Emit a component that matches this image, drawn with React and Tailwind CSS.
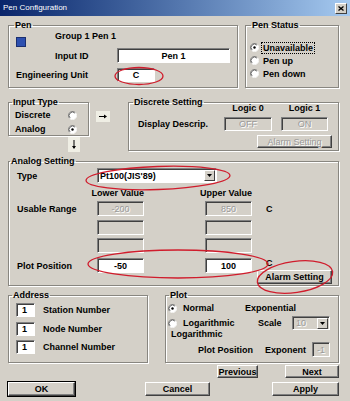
const Radio = ({ on }) => (
  <svg width="9" height="9" viewBox="0 0 12 12" className="shrink-0">
    <circle cx="6" cy="6" r="5" fill="#fff" />
    <path d="M2.1 9.9A5.5 5.5 0 0 1 9.9 2.1" fill="none" stroke="#808080" strokeWidth="1" />
    <path d="M2.8 9.2A4.5 4.5 0 0 1 9.2 2.8" fill="none" stroke="#404040" strokeWidth="1" />
    <path d="M9.9 2.1A5.5 5.5 0 0 1 2.1 9.9" fill="none" stroke="#fff" strokeWidth="1" />
    {on && <circle cx="6" cy="6" r="1.6" fill="#000" />}
  </svg>
);

const Group = ({ title, className = "", legend = "ml-[5px]", children }) => (
  <fieldset className={`border border-[#888680] shadow-[inset_1px_1px_0_#fff,1px_1px_0_#fff] ${className}`}>
    <legend className={`px-[1px] leading-[10px] ${legend}`}>{title}</legend>
    {children}
  </fieldset>
);

const Field = ({ className = "", disabled, children }) => (
  <div
    className={`flex items-center shrink-0 border border-t-[#808080] border-l-[#808080] border-b-white border-r-white shadow-[inset_1px_1px_0_#404040] ${
      disabled ? "bg-[#d4d0c8] text-[#9a9a9a] font-normal [text-shadow:1px_1px_0_#fff]" : "bg-white text-black"
    } ${className}`}
  >
    {children}
  </div>
);

const Btn = ({ className = "", disabled, children }) => (
  <button
    className={`flex items-center justify-center shrink-0 border border-t-white border-l-white border-b-[#404040] border-r-[#404040] shadow-[inset_-1px_-1px_0_#808080] ${
      disabled ? "text-[#9a9a9a] font-normal [text-shadow:1px_1px_0_#fff]" : "font-bold"
    } ${className}`}
  >
    {children}
  </button>
);

const DropBtn = () => (
  <div className="ml-auto mr-[1px] w-[11px] h-[11px] flex items-center justify-center bg-[#d4d0c8] border border-t-white border-l-white border-b-[#404040] border-r-[#404040]">
    <svg width="5" height="3" viewBox="0 0 5 3">
      <path d="M0 0h5L2.5 3z" fill="#000" />
    </svg>
  </div>
);

const ArrowBox = ({ down, className = "" }) => (
  <div className={`flex items-center justify-center bg-[#efeee4] ${down ? "w-[12px] h-[15px]" : "w-[14px] h-[11px]"} ${className}`}>
    {down ? (
      <svg width="12" height="15" viewBox="0 0 12 15">
        <path d="M6 3v8" stroke="#000" strokeWidth="1" />
        <path d="M4 9l2 3 2-3z" fill="#000" />
      </svg>
    ) : (
      <svg width="14" height="11" viewBox="0 0 14 11">
        <path d="M3 5.5h7" stroke="#000" strokeWidth="1" />
        <path d="M8 3.5l3 2-3 2z" fill="#000" />
      </svg>
    )}
  </div>
);

export default function App() {
  return (
    <div className="relative w-[350px] h-[401px] overflow-hidden bg-[#d4d0c8] [font-family:'Liberation_Sans',Arial,sans-serif] text-[9px] leading-[10px] font-bold text-black">
      <div className="h-[16px] flex items-center justify-between pl-[3px] pr-[3px] bg-linear-to-r from-[#0a246a] to-[#a6caf0]">
        <span className="text-white font-normal text-[8px]">Pen Configuration</span>
        <div className="w-[12px] h-[11px] flex items-center justify-center bg-[#d4d0c8] border border-t-white border-l-white border-b-[#404040] border-r-[#404040]">
          <svg width="6" height="5" viewBox="0 0 6 5">
            <path d="M0.5 0.5l5 4M5.5 0.5l-5 4" stroke="#000" strokeWidth="1.3" />
          </svg>
        </div>
      </div>

      <div className="flex flex-col pl-[8px] pr-[11px] pt-[4px]">
        {/* pen + status */}
        <div className="flex justify-between">
          <Group title="Pen" legend="ml-[5px]" className="w-[230px] h-[68px]">
            <div className="flex pl-[7px]">
              <div className="w-[39px] pt-[7px]">
                <div className="w-[10px] h-[10px] bg-[#2d50b0] border border-[#1b2f70]" />
              </div>
              <div className="flex flex-col">
                <div className="h-[12px] flex items-center">Group 1 Pen 1</div>
                <div className="flex items-center mt-[6px]">
                  <span className="w-[62px]">Input ID</span>
                  <Field className="w-[113px] h-[15px] justify-center">Pen 1</Field>
                </div>
              </div>
            </div>
            <div className="flex items-center pl-[7px] mt-[5px]">
              <span className="w-[101px]">Engineering Unit</span>
              <Field className="w-[38px] h-[14px] justify-center">C</Field>
            </div>
          </Group>

          <Group title="Pen Status" legend="ml-[5px]" className="w-[94px] h-[68px]">
            <div className="flex flex-col pl-[4px] pt-[11px]">
              {[
                ["Unavailable", true],
                ["Pen up", false],
                ["Pen down", false],
              ].map(([label, on]) => (
                <div key={label} className="h-[13px] flex items-center">
                  <Radio on={on} />
                  <span className={`ml-[3px] px-[1px] leading-[10px] ${on ? "outline-1 outline-dotted outline-black" : ""}`}>
                    {label}
                  </span>
                </div>
              ))}
            </div>
          </Group>
        </div>

        {/* input type + discrete */}
        <div className="flex mt-[9px]">
          <div className="flex flex-col w-[81px]">
            <Group title="Input Type" legend="ml-[3px]" className="h-[39px]">
              <div className="flex flex-col pl-[6px] pt-[2px] gap-[2px]">
                <div className="h-[12px] flex items-center">
                  <span className="w-[53px]">Discrete</span>
                  <Radio />
                </div>
                <div className="h-[12px] flex items-center">
                  <span className="w-[53px]">Analog</span>
                  <Radio on />
                </div>
              </div>
            </Group>
            <ArrowBox down className="ml-[60px] mt-[1px]" />
          </div>
          <ArrowBox className="ml-[7px] mt-[14px]" />
          <Group title="Discrete Setting" legend="ml-[4px]" className="ml-[18px] w-[211px] h-[54px]">
            <div className="flex flex-col -mt-[4px]">
              <div className="flex h-[10px] pl-[95px]">
                <span className="w-[48px] text-center">Logic 0</span>
                <span className="ml-[9px] w-[47px] text-center">Logic 1</span>
              </div>
              <div className="flex items-center mt-[4px]">
                <span className="w-[95px] pl-[9px]">Display Descrip.</span>
                <Field disabled className="w-[48px] h-[14px] justify-center">OFF</Field>
                <Field disabled className="ml-[9px] w-[47px] h-[14px] justify-center">ON</Field>
              </div>
              <Btn disabled className="ml-[128px] mt-[4px] w-[75px] h-[13px]">Alarm Setting</Btn>
            </div>
          </Group>
        </div>

        {/* analog setting */}
        <Group title="Analog Setting" legend="ml-[1px]" className="mt-[4px] h-[130px]">
          <div className="flex flex-col pl-[8px]">
            <div className="flex items-center mt-[2px]">
              <span className="w-[80px]">Type</span>
              <Field className="w-[120px] h-[15px] pl-[2px]">
                <span>Pt100(JIS'89)</span>
                <DropBtn />
              </Field>
            </div>
            <div className="flex h-[10px] mt-[5px]">
              <span className="ml-[80px] w-[47px] flex justify-end whitespace-nowrap">Lower Value</span>
              <span className="ml-[61px] w-[47px] flex justify-end whitespace-nowrap">Upper Value</span>
            </div>
            <div className="flex items-center mt-[3px]">
              <span className="w-[80px]">Usable Range</span>
              <Field disabled className="w-[47px] h-[15px] justify-center">-200</Field>
              <Field disabled className="ml-[61px] w-[47px] h-[15px] justify-center">850</Field>
              <span className="ml-[14px]">C</span>
            </div>
            <div className="flex items-center mt-[4px] pl-[80px]">
              <Field disabled className="w-[47px] h-[15px]" />
              <Field disabled className="ml-[61px] w-[47px] h-[15px]" />
            </div>
            <div className="flex items-center mt-[3px] pl-[80px]">
              <Field disabled className="w-[47px] h-[15px]" />
              <Field disabled className="ml-[61px] w-[47px] h-[15px]" />
            </div>
            <div className="flex items-start mt-[5px]">
              <span className="w-[80px] h-[15px] flex items-center">Plot Position</span>
              <Field className="w-[47px] h-[15px] justify-center">-50</Field>
              <Field className="ml-[61px] w-[47px] h-[15px] justify-center">100</Field>
              <div className="flex flex-col ml-[5px]">
                <span className="ml-[9px] h-[10px]">C</span>
                <Btn className="mt-[2px] w-[75px] h-[14px]">Alarm Setting</Btn>
              </div>
            </div>
          </div>
        </Group>

        {/* address + plot */}
        <div className="flex mt-[4px]">
          <Group title="Address" legend="ml-[3px]" className="w-[140px] h-[73px]">
            <div className="flex flex-col pl-[7px] pt-[3px]">
              {["Station Number", "Node Number", "Channel Number"].map((label, i) => (
                <div key={label} className={`flex items-center ${i === 0 ? "" : i === 1 ? "mt-[5px]" : "mt-[4px]"}`}>
                  <Field className="w-[19px] h-[14px] pl-[5px]">1</Field>
                  <span className="ml-[8px]">{label}</span>
                </div>
              ))}
            </div>
          </Group>

          <Group title="Plot" legend="ml-[3px]" className="ml-[17px] w-[174px] h-[73px]">
            <div className="flex flex-col pl-[2px] pt-[2px]">
              <div className="flex items-center h-[12px]">
                <div className="w-[77px] flex items-center">
                  <Radio on />
                  <span className="ml-[6px]">Normal</span>
                </div>
                <span>Exponential</span>
              </div>
              <div className="flex items-center h-[14px] mt-[2px]">
                <div className="w-[90px] flex items-center">
                  <Radio />
                  <span className="ml-[6px]">Logarithmic</span>
                </div>
                <span className="w-[34px]">Scale</span>
                <Field disabled className="w-[38px] h-[14px] pl-[3px]">
                  <span>10</span>
                  <DropBtn />
                </Field>
              </div>
              <div className="h-[8px] leading-[8px] pl-[3px]">Logarithmic</div>
              <div className="flex items-center mt-[4px] h-[15px]">
                <span className="ml-[30px] w-[67px]">Plot Position</span>
                <span className="w-[47px]">Exponent</span>
                <Field disabled className="w-[18px] h-[15px] justify-center">-1</Field>
              </div>
            </div>
          </Group>
        </div>

        {/* buttons */}
        <div className="flex mt-[2px] h-[13px]">
          <Btn className="ml-[209px] w-[41px]">Previous</Btn>
          <Btn className="ml-[27px] w-[54px]">Next</Btn>
        </div>
        <div className="flex mt-[4px] h-[14px]">
          <Btn className="w-[67px] outline-1 outline-black">OK</Btn>
          <Btn className="ml-[70px] w-[65px]">Cancel</Btn>
          <Btn className="ml-[62px] w-[67px]">Apply</Btn>
        </div>
      </div>

      {/* red annotation marks */}
      <svg className="absolute inset-0 pointer-events-none" width="350" height="401" viewBox="0 0 350 401">
        <g fill="none" stroke="#d01c2c" strokeWidth="1.3">
          <ellipse cx="139" cy="76" rx="24" ry="8.5" />
          <ellipse cx="158" cy="178" rx="72" ry="11.5" transform="rotate(-2 158 178)" />
          <ellipse cx="178" cy="264" rx="90" ry="14" />
          <ellipse cx="295" cy="277" rx="38" ry="15.5" transform="rotate(-8 295 277)" />
        </g>
      </svg>
    </div>
  );
}
